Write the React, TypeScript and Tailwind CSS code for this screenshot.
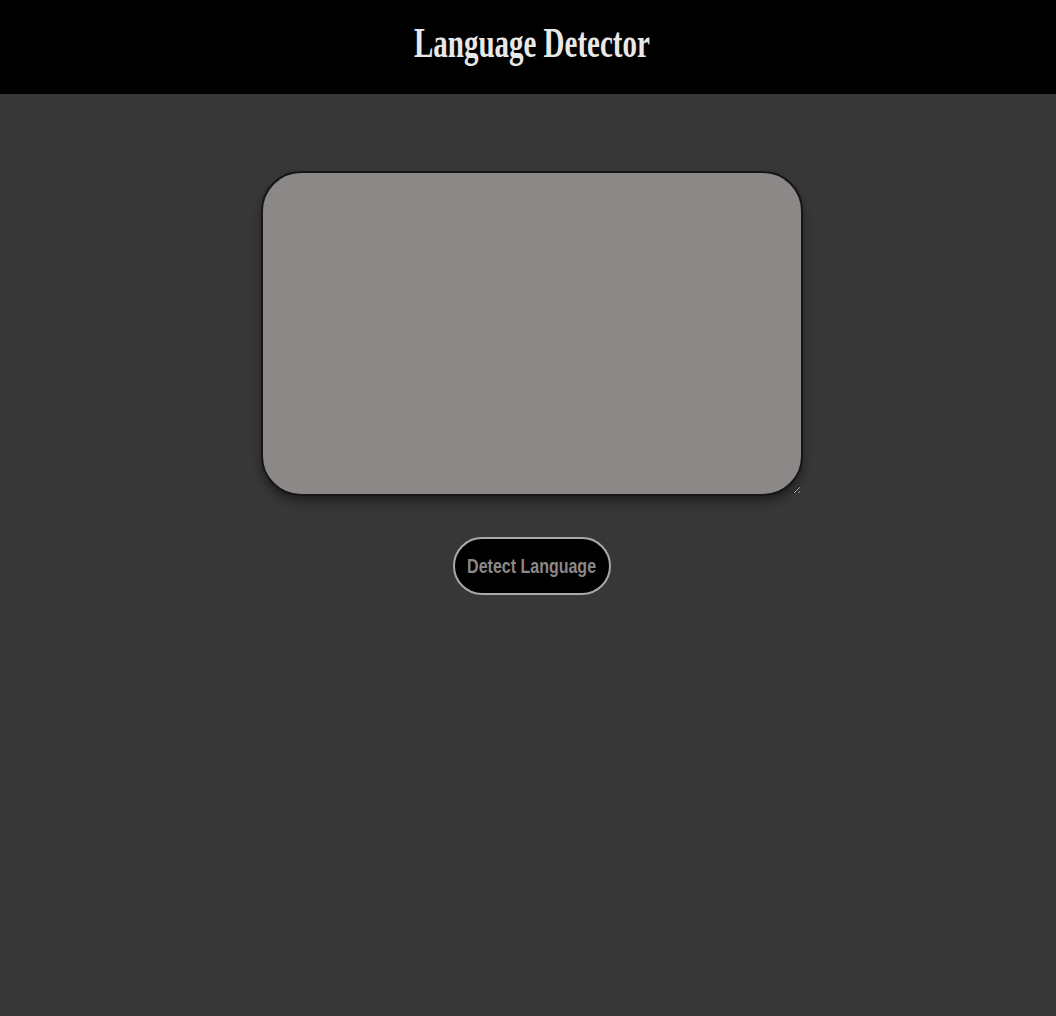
import { useState } from "react";

export default function App() {
  const [text, setText] = useState("");
  return (
    <div className="min-h-[1016px] w-full bg-[#373737]">
      <header className="flex h-[94px] items-center justify-center bg-black pb-[8px] pl-[8px]">
        <h1 className="origin-center scale-x-[0.69] whitespace-nowrap font-['Liberation_Serif',serif] text-[42px] font-bold leading-none text-[#e8e8e8]">
          Language Detector
        </h1>
      </header>
      <main className="flex flex-col items-center pl-[8px] pt-[77px]">
        <textarea
          value={text}
          onChange={(e) => setText(e.target.value)}
          className="block h-[325px] w-[542px] rounded-[40px] border-2 border-[#151515] bg-[#8c8888] p-4 text-black shadow-[0_6px_10px_rgba(0,0,0,0.4)] outline-none"
        />
        <button
          type="button"
          className="mt-[41px] flex h-[58px] w-[158px] items-center justify-center rounded-full border-2 border-[#a9a9a9] bg-black"
        >
          <span className="inline-block origin-center scale-x-[0.8] whitespace-nowrap font-['Liberation_Sans',sans-serif] text-[20px] font-bold text-[#8c8888]">
            Detect Language
          </span>
        </button>
      </main>
    </div>
  );
}
